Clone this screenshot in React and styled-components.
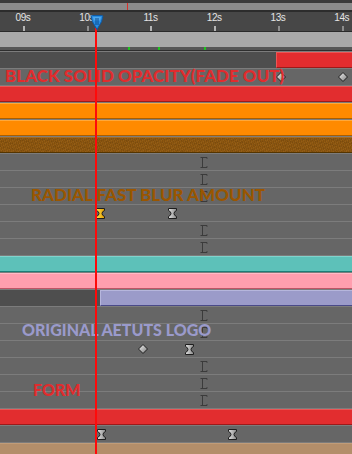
import React from 'react';
import styled, { createGlobalStyle, css } from 'styled-components';

const Global = createGlobalStyle`
  html, body { margin: 0; padding: 0; background: #4e4e4e; overflow: hidden; }
  #root { width: 352px; height: 454px; }
`;

const Timeline = styled.div`
  position: relative;
  width: 352px;
  height: 454px;
  overflow: hidden;
  background: #4e4e4e;
  display: flex;
  flex-direction: column;
  font-family: "Liberation Sans", Arial, sans-serif;
`;

/* ---------- header ---------- */
const Navigator = styled.div`
  position: relative;
  flex: none;
  height: 7px;
  background: #8b8b8b;
  border-top: 3px solid #3a3a3a;
  border-bottom: 2px solid #2c2c2c;
`;

const NavMark = styled.div`
  position: absolute;
  top: 0;
  left: ${p => p.$x}px;
  width: 1px;
  height: 100%;
  background: ${p => p.$c || '#d8302a'};
`;

const Ruler = styled.div`
  flex: none;
  height: 19px;
  background: #474747;
  border-bottom: 1px solid #2a2a2a;
  display: flex;
  margin-left: -7.9px;
`;

const TickCell = styled.div`
  flex: 0 0 63.75px;
  display: flex;
  flex-direction: column;
  justify-content: flex-end;
  align-items: center;
`;

const TickLabel = styled.span`
  font-size: 10px;
  line-height: 10px;
  letter-spacing: -0.4px;
  color: #e4e4e4;
  margin: 0 2px 3px 0;
`;

const Tick = styled.div`
  width: 2px;
  height: 5px;
  background: ${p => (p.$dim ? '#8c8c8c' : '#b4b4b4')};
`;

const WorkArea = styled.div`
  flex: none;
  height: 15px;
  background: #a9a9a9;
`;

const MarkerStrip = styled.div`
  position: relative;
  flex: none;
  height: 3px;
  background: #575757;
  border-bottom: 1px solid #2e2e2e;
`;

const Marker = styled.div`
  position: absolute;
  top: 0;
  left: ${p => p.$x}px;
  width: 2px;
  height: 3px;
  background: #1ec41e;
`;

/* ---------- rows ---------- */
const Tracks = styled.div`
  flex: 1;
  display: flex;
  flex-direction: column;
`;

const palette = {
  red: { bg: '#e22d2f', hi: '#ec5656', lo: '#9c1a1a' },
  orange: { bg: '#ff8a00', hi: '#ffa83a', lo: '#aa5e00' },
  brown: { bg: '#8e570f', hi: '#a76b1f', lo: '#553500' },
  teal: { bg: '#5dc1b9', hi: '#80d3cc', lo: '#1b7f77' },
  pink: { bg: '#ff9eae', hi: '#ffbcc6', lo: '#be5566' },
  lavender: { bg: '#9b9bc9', hi: '#b6b6dc', lo: '#4a4a88' },
  tan: { bg: '#b38e6a', hi: '#c09c78', lo: '#8a6a48' },
};

const Row = styled.div`
  position: relative;
  flex: none;
  box-sizing: border-box;
  height: 17px;
  display: flex;
  border-top: 1px solid #7c7c7c;
  background: ${p => (p.$kind === 'dark' ? '#4e4e4e' : '#666666')};
`;

const Bar = styled.div`
  flex: 1;
  box-sizing: border-box;
  margin-left: ${p => p.$from || 0}px;
  background-color: ${p => palette[p.$c].bg};
  border-top: 1px solid ${p => palette[p.$c].hi};
  border-bottom: 1px solid ${p => palette[p.$c].lo};
  ${p => p.$from > 0 && css`border-left: 1px solid ${palette[p.$c].hi};`}
  ${p => p.$c === 'brown' && css`
    background-image:
      repeating-linear-gradient(73deg, rgba(0,0,0,0.09) 0 1px, transparent 1px 2px),
      repeating-linear-gradient(-29deg, rgba(255,190,110,0.07) 0 1px, transparent 1px 3px),
      repeating-linear-gradient(11deg, rgba(0,0,0,0.06) 0 1px, transparent 1px 5px);
  `}
`;

const Key = styled.svg`
  position: absolute;
  left: ${p => p.$x - p.$w / 2}px;
  top: ${p => (16 - p.$h) / 2}px;
  width: ${p => p.$w}px;
  height: ${p => p.$h}px;
  overflow: visible;
`;

function Diamond({ x }) {
  return (
    <Key $x={x} $w={10} $h={10} viewBox="0 0 10 10">
      <defs>
        <linearGradient id="dg" x1="0" y1="0" x2="1" y2="1">
          <stop offset="0" stopColor="#f2f2f2" />
          <stop offset="1" stopColor="#7a7a7a" />
        </linearGradient>
      </defs>
      <polygon points="5,0.5 9.5,5 5,9.5 0.5,5" fill="url(#dg)" stroke="#1c1c1c" strokeWidth="1" />
    </Key>
  );
}

function Hourglass({ x, gold }) {
  const id = gold ? 'hgy' : 'hgg';
  return (
    <Key $x={x} $w={9} $h={11} viewBox="0 0 9 11">
      <defs>
        <linearGradient id={id} x1="0" y1="0" x2="1" y2="0">
          <stop offset="0" stopColor={gold ? '#ffe14a' : '#e2e2e2'} />
          <stop offset="1" stopColor={gold ? '#e09a00' : '#8a8a8a'} />
        </linearGradient>
      </defs>
      <path
        d="M0.5 0.5 H8.5 V2.5 Q6 3.6 6 5.5 Q6 7.4 8.5 8.5 V10.5 H0.5 V8.5 Q3 7.4 3 5.5 Q3 3.6 0.5 2.5 Z"
        fill={`url(#${id})`}
        stroke="#1e1e1e"
        strokeWidth="1"
      />
    </Key>
  );
}

function Beam({ x }) {
  return (
    <Key $x={x} $w={8} $h={11} viewBox="0 0 8 11">
      <path d="M0.5 0.5 H7 M0.5 10.5 H7 M2.5 0.5 V10.5 M7 0.5 V1.8 M7 10.5 V9.2" stroke="#3b3b3b" strokeWidth="1" fill="none" />
    </Key>
  );
}

/* ---------- overlays ---------- */
const PlayLine = styled.div`
  position: absolute;
  left: 95px;
  top: 28px;
  bottom: 0;
  width: 2px;
  background: #ff0a0a;
  z-index: 3;
`;

const PlayHead = styled.svg`
  position: absolute;
  left: 90px;
  top: 15px;
  width: 14px;
  height: 15px;
  z-index: 4;
`;

const Note = styled.div`
  position: absolute;
  left: ${p => p.$x}px;
  top: ${p => p.$y}px;
  font-family: "Lato", "DejaVu Sans", sans-serif;
  font-weight: 900;
  font-size: ${p => p.$size || 17}px;
  line-height: 1;
  letter-spacing: ${p => p.$ls || 0}px;
  white-space: nowrap;
  color: ${p => p.$c};
  z-index: 2;
`;

const ticks = [
  { t: '09s' }, { t: '10s', dim: true }, { t: '11s' },
  { t: '12s' }, { t: '13s', dim: true }, { t: '14s', dim: true },
];

const B = 204;
const rows = [
  { kind: 'dark', bar: 'red', from: 276 },
  { keys: [{ d: 281 }, { d: 343 }] },
  { bar: 'red' },
  { bar: 'orange' },
  { bar: 'orange' },
  { bar: 'brown' },
  { keys: [{ b: B }] },
  { keys: [{ b: B }] },
  { keys: [{ b: B }] },
  { keys: [{ h: 100, gold: true }, { h: 172.5 }] },
  { keys: [{ b: B }] },
  { keys: [{ b: B }] },
  { bar: 'teal' },
  { bar: 'pink' },
  { kind: 'dark', bar: 'lavender', from: 100 },
  { keys: [{ b: B }] },
  { keys: [{ b: B }] },
  { keys: [{ d: 143 }, { h: 189 }] },
  { keys: [{ b: B }] },
  { keys: [{ b: B }] },
  { keys: [{ b: B }] },
  { bar: 'red' },
  { keys: [{ h: 101 }, { h: 232 }] },
  { bar: 'tan' },
];

export default function App() {
  return (
    <>
      <Global />
      <Timeline>
        <Navigator>
          <NavMark $x={127} />
        </Navigator>
        <Ruler>
          {ticks.map(k => (
            <TickCell key={k.t}>
              <TickLabel>{k.t}</TickLabel>
              <Tick $dim={k.dim} />
            </TickCell>
          ))}
        </Ruler>
        <WorkArea />
        <MarkerStrip>
          <Marker $x={128} />
          <Marker $x={158} />
          <Marker $x={204} />
        </MarkerStrip>
        <Tracks>
          {rows.map((r, i) => (
            <Row key={i} $kind={r.kind}>
              {r.bar && <Bar $c={r.bar} $from={r.from} />}
              {r.keys && r.keys.map((k, j) =>
                k.d != null ? <Diamond key={j} x={k.d} /> :
                k.h != null ? <Hourglass key={j} x={k.h} gold={k.gold} /> :
                <Beam key={j} x={k.b} />
              )}
            </Row>
          ))}
        </Tracks>

        <Note $x={5} $y={67} $c="#e02c2e">BLACK SOLID OPACITY(FADE OUT)</Note>
        <Note $x={31} $y={186} $c="#9a5600">RADIAL FAST BLUR AMOUNT</Note>
        <Note $x={22} $y={322} $size={16} $c="#9a9acb">ORIGINAL AETUTS LOGO</Note>
        <Note $x={33} $y={382} $size={16} $c="#e02c2e">FORM</Note>

        <PlayLine />
        <PlayHead viewBox="0 0 14 15">
          <path d="M1.2 1.6 Q1 0.5 2.2 0.5 H11.8 Q13 0.5 12.8 1.6 L11.6 6.5 L7 14.5 L2.4 6.5 Z" fill="#2a8de0" stroke="#0c5aa6" strokeWidth="1" />
          <path d="M3 2 H11 L10.2 5.5 H3.8 Z" fill="#5fb4f2" opacity="0.7" />
          <path d="M6 3 V10 M8 3 V10" stroke="#0a4a8c" strokeWidth="1" />
        </PlayHead>
      </Timeline>
    </>
  );
}
